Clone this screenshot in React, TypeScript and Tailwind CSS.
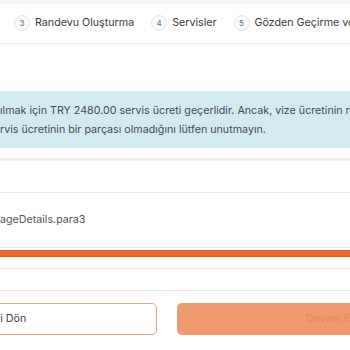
import React from "react";

function Step({ n, label }: { n: number; label: string }) {
  return (
    <div className="flex items-center gap-[5px] shrink-0">
      <div className="w-[16px] h-[16px] rounded-full border border-[#e6e6e6] bg-[#fafafa] text-[8px] text-[#666] flex items-center justify-center leading-none">
        {n}
      </div>
      <span className="text-[10.7px] text-[#3a3a3a] whitespace-nowrap">{label}</span>
    </div>
  );
}

export default function App() {
  return (
    <div
      className="w-[350px] h-[350px] overflow-hidden bg-white flex flex-col"
      style={{ fontFamily: "Inter, 'Noto Sans', sans-serif" }}
    >
      <div className="h-[4px] bg-[#f6f6f6] shrink-0" />
      <div className="h-[40px] shrink-0 border-b border-[#ececec] shadow-[0_1px_3px_rgba(0,0,0,0.05)] flex items-center pl-[14px] gap-[17px]">
        <Step n={3} label="Randevu Oluşturma" />
        <Step n={4} label="Servisler" />
        <Step n={5} label="Gözden Geçirme ve Onay" />
      </div>
      <div className="mt-[47px] h-[57px] shrink-0 bg-[#d2ebf0] pt-[10px] text-[10.7px] leading-[19px] text-[#434b50] whitespace-nowrap">
        <div>ılmak için TRY 2480.00 servis ücreti geçerlidir. Ancak, vize ücretinin resmi olarak</div>
        <div>rvis ücretinin bir parçası olmadığını lütfen unutmayın.</div>
      </div>
      <div className="mt-[10px] h-[3px] shrink-0 bg-[#f2f2f2] border-t border-[#ebebeb]" />
      <div className="h-[32px] shrink-0 border-b border-[#e8e8e8]" />
      <div className="h-[55px] shrink-0 border-b border-[#ececec] flex items-center text-[10.7px] text-[#555]">
        <span className="whitespace-nowrap">ageDetails.para3</span>
      </div>
      <div className="mt-[2px] h-[7px] shrink-0 bg-[#e8682d] border-b border-[#d95a22]" />
      <div className="h-[12px] shrink-0 border-b border-[#ececec]" />
      <div className="h-[22px] shrink-0 border-b border-[#e9e9e9]" />
      <div className="mt-[12px] flex gap-[20px] -ml-[149px] shrink-0">
        <button className="w-[306px] h-[32px] shrink-0 rounded-[5px] border border-[#d8ab8e] bg-white text-[10.7px] text-[#3e3e3e] flex items-center justify-center">
          Geri Dön
        </button>
        <button className="w-[306px] h-[32px] shrink-0 rounded-[5px] bg-[#f19a6f] text-[10.7px] text-[#e8885e] flex items-center justify-center">
          Devam Et
        </button>
      </div>
    </div>
  );
}
